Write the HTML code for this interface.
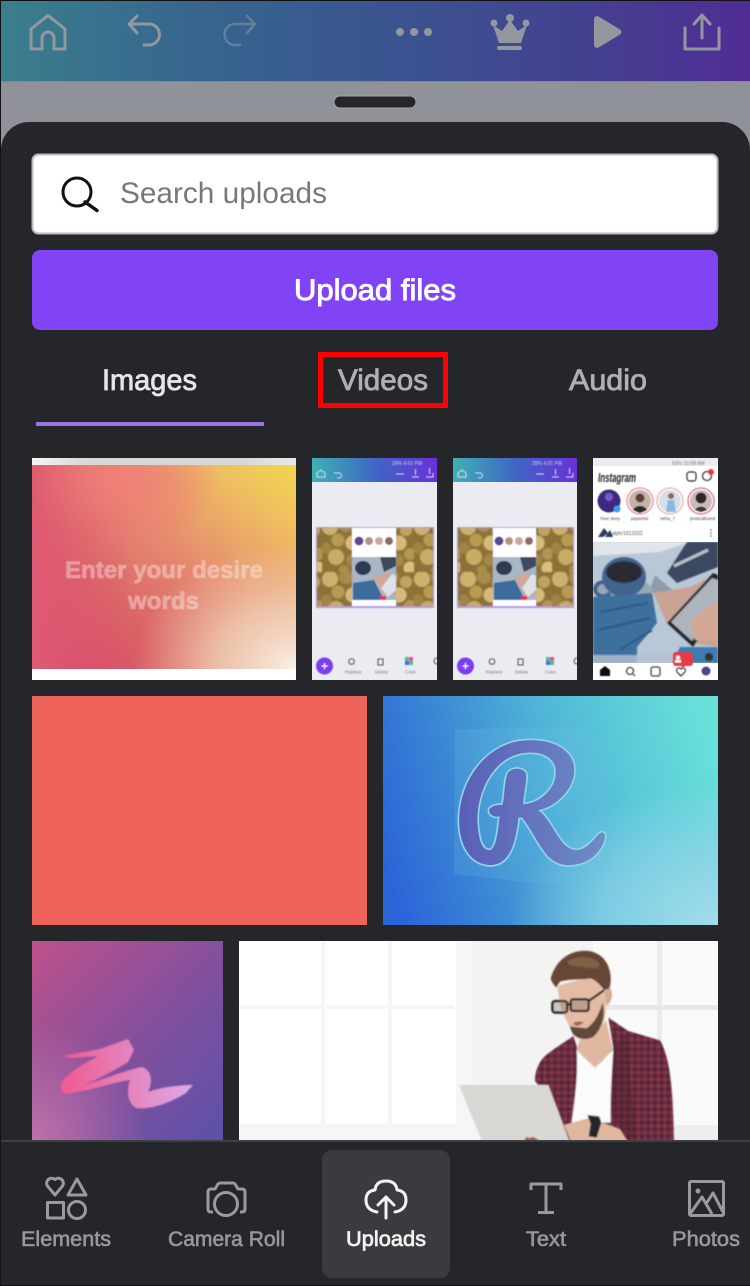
<!DOCTYPE html>
<html lang="en">
<head>
<meta charset="utf-8">
<title>Uploads</title>
<style>
html,body{margin:0;padding:0;background:#25262a;width:750px;height:1286px;overflow:hidden}
svg{display:block}
text{font-family:"Liberation Sans",sans-serif}
</style>
</head>
<body>
<svg width="750" height="1286" viewBox="0 0 750 1286" xmlns="http://www.w3.org/2000/svg">
<defs>
<linearGradient id="top" x1="0" x2="1" y1="0" y2="0">
<stop offset="0" stop-color="#3a7f8c"/><stop offset=".25" stop-color="#37668e"/><stop offset=".5" stop-color="#3a5590"/><stop offset=".75" stop-color="#42438f"/><stop offset="1" stop-color="#502d94"/>
</linearGradient>
<linearGradient id="mini" x1="0" x2="1" y1="0" y2="0">
<stop offset="0" stop-color="#3fb0b5"/><stop offset=".5" stop-color="#3f66c4"/><stop offset="1" stop-color="#6a30d8"/>
</linearGradient>
<linearGradient id="strip" x1="0" x2="1" y1="0" y2="0">
<stop offset="0" stop-color="#f4f4f2"/><stop offset=".2" stop-color="#d8d8d6"/><stop offset=".8" stop-color="#d8d8d6"/><stop offset="1" stop-color="#e8e8e6"/>
</linearGradient>
<linearGradient id="t1" x1="0" y1="1" x2="1" y2="0">
<stop offset="0" stop-color="#d6446a"/><stop offset=".3" stop-color="#da6266"/><stop offset=".56" stop-color="#e68a70"/><stop offset=".82" stop-color="#efbc62"/><stop offset="1" stop-color="#f0d84e"/>
</linearGradient>
<radialGradient id="t1a" cx="1" cy="1" r=".62"><stop offset="0" stop-color="#faf0e6"/><stop offset=".5" stop-color="#f0d0b4" stop-opacity=".8"/><stop offset="1" stop-color="#ecc8a8" stop-opacity="0"/></radialGradient>
<radialGradient id="t1b" cx=".35" cy=".06" r=".36"><stop offset="0" stop-color="#f08078"/><stop offset="1" stop-color="#ee7078" stop-opacity="0"/></radialGradient>
<linearGradient id="t1c" x1="0" x2="1" y1="0" y2="0"><stop offset="0" stop-color="#de5a72"/><stop offset=".38" stop-color="#de5a72" stop-opacity="0"/></linearGradient>
<linearGradient id="r" gradientUnits="userSpaceOnUse" x1="383" y1="860" x2="718" y2="760">
<stop offset="0" stop-color="#2b64d8"/><stop offset=".28" stop-color="#3c8ad4"/><stop offset=".55" stop-color="#50b4d8"/><stop offset=".8" stop-color="#5ccfd8"/><stop offset="1" stop-color="#68e0da"/>
</linearGradient>
<radialGradient id="rb" cx="1" cy="1" r=".62"><stop offset="0" stop-color="#a4dcea"/><stop offset=".55" stop-color="#90d4e8" stop-opacity=".7"/><stop offset="1" stop-color="#90d4e8" stop-opacity="0"/></radialGradient>
<linearGradient id="rf" x1="0" x2="1" y1="0" y2="0"><stop offset="0" stop-color="#5a5eb6"/><stop offset="1" stop-color="#6e8cc6"/></linearGradient>
<linearGradient id="p" x1="0" y1="0" x2="1" y2="1">
<stop offset="0" stop-color="#c0508a"/><stop offset=".5" stop-color="#85509c"/><stop offset="1" stop-color="#5c50aa"/>
</linearGradient>
<radialGradient id="pb" cx="0" cy="1" r=".6"><stop offset="0" stop-color="#c070a8"/><stop offset="1" stop-color="#c070a8" stop-opacity="0"/></radialGradient>
<linearGradient id="brush" x1="0" x2="1" y1="0" y2="0"><stop offset="0" stop-color="#ee5a90"/><stop offset="1" stop-color="#dcaae6"/></linearGradient>
<pattern id="coins" width="46" height="52" patternUnits="userSpaceOnUse">
<rect width="46" height="52" fill="#8d7238"/>
<circle cx="8" cy="7" r="8" fill="#cdb26e"/><circle cx="24" cy="5" r="7" fill="#a98c48"/><circle cx="38" cy="10" r="6" fill="#bfa45e"/>
<circle cx="16" cy="20" r="6.500" fill="#b89a52"/><circle cx="31" cy="23" r="7.500" fill="#d6bb78"/><circle cx="4" cy="28" r="5.500" fill="#a08444"/>
<circle cx="14" cy="37" r="8" fill="#c9ac64"/><circle cx="30" cy="40" r="6" fill="#a48746"/><circle cx="42" cy="34" r="6" fill="#b39650"/><circle cx="42" cy="48" r="6.500" fill="#d9c07e"/><circle cx="22" cy="50" r="5" fill="#ab8e4a"/>
</pattern>
<pattern id="plaid" width="20" height="20" patternUnits="userSpaceOnUse">
<rect width="20" height="20" fill="#6e2a3c"/><rect width="10" height="10" fill="#4a2a38"/><rect x="10" y="10" width="10" height="10" fill="#84384a"/>
</pattern>
<filter id="b1" x="-5%" y="-5%" width="110%" height="110%"><feGaussianBlur stdDeviation=".5"/></filter>
<filter id="b2" x="-10%" y="-10%" width="120%" height="120%"><feGaussianBlur stdDeviation=".9"/></filter>
<filter id="b4" x="-10%" y="-10%" width="120%" height="120%"><feGaussianBlur stdDeviation="2.400"/></filter>
<clipPath id="cMan"><rect x="239" y="941" width="479" height="199"/></clipPath>
<clipPath id="cT2"><rect x="312" y="458" width="125" height="222"/></clipPath>
<clipPath id="cT3"><rect x="453" y="458" width="124" height="222"/></clipPath>
<clipPath id="cT4"><rect x="593" y="542" width="125" height="121"/></clipPath>
<clipPath id="cR"><rect x="383" y="696" width="335" height="229"/></clipPath>
</defs>

<!-- background -->
<rect width="750" height="1286" fill="#8f9299"/>
<rect width="750" height="81" fill="url(#top)"/>
<rect y="81" width="750" height="1" fill="#7f8a96"/>

<!-- top icons -->
<g fill="none" stroke="#94979e" stroke-width="3" stroke-linejoin="round" stroke-linecap="round">
<path d="M31 49V29L48 15.500L65 29V49H54V38a6 6 0 0 0-12 0V49Z"/>
<path d="M137 16L129 24L137 33M129 24H149a10.500 10.500 0 0 1 0 21H144"/>
<path d="M247 16L255 24L247 33M255 24H235a10.500 10.500 0 0 0 0 21H240" stroke="#5f8099" stroke-width="2.500"/>
<path d="M685 28V49H719V28M702 38V16M694 24L702 15L710 24"/>
</g>
<g fill="#94979e">
<circle cx="400" cy="32" r="4"/><circle cx="414" cy="32" r="4"/><circle cx="428" cy="32" r="4"/>
<circle cx="494" cy="23" r="3.500"/><circle cx="510" cy="18" r="4"/><circle cx="526" cy="23" r="3.500"/>
<path d="M499 43L493 25L502 31L510 20L518 31L527 25L521 43Z"/>
<rect x="497" y="46" width="25" height="4" rx="2"/>
<path d="M594 19a3 3 0 0 1 4.500-2.500L620 29.500a3 3 0 0 1 0 5L598.500 47.500a3 3 0 0 1-4.500-2.500Z"/>
</g>

<!-- handle -->
<rect x="334" y="96" width="82" height="12" rx="6" fill="#25262a" stroke="#a4a6ab" stroke-width="1"/>

<!-- sheet -->
<path d="M1 1286V150a28 28 0 0 1 28-28H722a28 28 0 0 1 28 28V1286Z" fill="#25262a"/>

<!-- search -->
<rect x="32.500" y="154.500" width="685" height="79" rx="6" fill="#fff" stroke="#b9bbc0" stroke-width="2"/>
<circle cx="77" cy="192" r="14" fill="none" stroke="#111" stroke-width="3"/>
<path d="M85 202L97 210.500" stroke="#111" stroke-width="3.500" stroke-linecap="round"/>
<text x="120" y="203" font-size="30" fill="#77787d" textLength="207" lengthAdjust="spacingAndGlyphs">Search uploads</text>

<!-- upload button -->
<rect x="32" y="250" width="686" height="80" rx="8" fill="#8043f5"/>
<text x="294" y="300" font-size="30" fill="#fff" stroke="#fff" stroke-width=".9" textLength="162" lengthAdjust="spacingAndGlyphs">Upload files</text>

<!-- tabs -->
<g font-size="30" stroke-width=".8">
<text x="102" y="390" fill="#e6e6e6" stroke="#e6e6e6" textLength="95" lengthAdjust="spacingAndGlyphs">Images</text>
<text x="338" y="390" fill="#b0b0b2" stroke="#b0b0b2" textLength="90" lengthAdjust="spacingAndGlyphs">Videos</text>
<text x="569" y="390" fill="#b0b0b2" stroke="#b0b0b2" textLength="78" lengthAdjust="spacingAndGlyphs">Audio</text>
</g>
<rect x="36" y="422" width="228" height="4" fill="#9b74e6"/>
<rect x="320.500" y="354.500" width="125" height="51" fill="none" stroke="#fe0000" stroke-width="5"/>

<!-- thumbnail 1 -->
<rect x="32" y="458" width="264" height="222" fill="#fff"/>
<rect x="32" y="458" width="264" height="7" fill="url(#strip)"/>
<rect x="32" y="465" width="264" height="204" fill="url(#t1)"/>
<rect x="32" y="465" width="264" height="204" fill="url(#t1c)"/>
<rect x="32" y="465" width="264" height="204" fill="url(#t1b)"/>
<rect x="32" y="465" width="264" height="204" fill="url(#t1a)"/>
<g filter="url(#b1)" font-size="24" font-weight="700" fill="#fff" fill-opacity=".36" stroke="#fff" stroke-opacity=".3" stroke-width=".6">
<text x="65" y="578" textLength="198" lengthAdjust="spacingAndGlyphs">Enter your desire</text>
<text x="128" y="609" textLength="71" lengthAdjust="spacingAndGlyphs">words</text>
</g>

<!-- thumbnail 2 -->
<g clip-path="url(#cT2)">
<rect x="312" y="458" width="125" height="222" fill="#ebebf2"/>
<rect x="312" y="458" width="125" height="24" fill="url(#mini)"/>
<g filter="url(#b1)">
<g fill="none" stroke="#d8e4f0" stroke-width="1">
<path d="M317 477v-4l4-3 4 3v4ZM334 473h5a2.500 2.500 0 0 1 0 5h-2M396 474h8M412 477h7M415.500 469v6M426 477h7v-4M429.500 468v6"/>
</g>
<g fill="#c8d4ec" font-size="5"><text x="392" y="465">28% 4:01 PM</text></g>
<rect x="316" y="527" width="118" height="81" fill="#b79ae6"/>
<g filter="url(#b1)">
<rect x="317" y="528" width="35" height="78" fill="url(#coins)"/>
<rect x="396" y="528" width="37" height="78" fill="url(#coins)"/>
</g>
<rect x="352" y="528" width="44" height="78" fill="#fff"/>
<rect x="352" y="557" width="44" height="43" fill="#a8b6c6"/>
<path d="M380 557H396V566L384 572Z" fill="#3c4a5e"/>
<ellipse cx="363" cy="568" rx="8" ry="7" fill="#2e3a52"/>
<path d="M353 583L374 580L384 600H353Z" fill="#3c6c9c"/>
<path d="M373 578L388 572L396 585V595L383 594Z" fill="#cfa89a"/>
<path d="M381 588L392 574L396 576V590L388 597Z" fill="#dde2e8"/>
<circle cx="359" cy="541" r="4.500" fill="#5a4a90"/><circle cx="369" cy="541" r="4" fill="#b89080"/><circle cx="379" cy="541" r="4" fill="#c8a8a0"/><circle cx="389" cy="541" r="4" fill="#8a6a6a"/>
<rect x="380" y="596" width="6" height="4" fill="#e03848"/>
<circle cx="324.500" cy="666" r="8.500" fill="#7c3cf0"/>
<path d="M321.500 666h6M324.500 663v6" stroke="#fff" stroke-width="1"/>
<circle cx="351.500" cy="661.500" r="2.800" fill="none" stroke="#555" stroke-width="1"/>
<rect x="378" y="659" width="5" height="6" fill="none" stroke="#555" stroke-width="1"/>
<rect x="405" y="657" width="8" height="8" fill="#55c080"/><rect x="409" y="657" width="4" height="4" fill="#f04aa0"/><rect x="405" y="661" width="4" height="4" fill="#3a70ff"/>
<circle cx="437" cy="661" r="3" fill="none" stroke="#555"/>
<g font-size="4.500" fill="#777"><text x="345" y="673.500">Replace</text><text x="375" y="673.500">Delete</text><text x="405" y="673.500">Color</text></g>
</g>
</g>

<!-- thumbnail 3 -->
<g clip-path="url(#cT3)">
<rect x="453" y="458" width="124" height="222" fill="#ebebf2"/>
<rect x="453" y="458" width="124" height="24" fill="url(#mini)"/>
<g filter="url(#b1)">
<g fill="none" stroke="#d8e4f0" stroke-width="1">
<path d="M458 477v-4l4-3 4 3v4ZM475 473h5a2.500 2.500 0 0 1 0 5h-2M536 474h8M552 477h7M555.500 469v6M566 477h7v-4M569.500 468v6"/>
</g>
<g fill="#c8d4ec" font-size="5"><text x="532" y="465">28% 4:01 PM</text></g>
<rect x="457" y="527" width="117" height="81" fill="#b79ae6"/>
<g filter="url(#b1)">
<rect x="458" y="528" width="35" height="78" fill="url(#coins)"/>
<rect x="536" y="528" width="37" height="78" fill="url(#coins)"/>
</g>
<rect x="493" y="528" width="43" height="78" fill="#fff"/>
<rect x="493" y="557" width="43" height="43" fill="#a8b6c6"/>
<path d="M520 557H536V566L524 572Z" fill="#3c4a5e"/>
<ellipse cx="504" cy="568" rx="8" ry="7" fill="#2e3a52"/>
<path d="M494 583L515 580L525 600H494Z" fill="#3c6c9c"/>
<path d="M514 578L528 572L536 585V595L524 594Z" fill="#cfa89a"/>
<path d="M522 588L532 574L536 576V590L528 597Z" fill="#dde2e8"/>
<circle cx="499" cy="541" r="4.500" fill="#5a4a90"/><circle cx="509" cy="541" r="4" fill="#b89080"/><circle cx="519" cy="541" r="4" fill="#c8a8a0"/><circle cx="529" cy="541" r="4" fill="#8a6a6a"/>
<rect x="521" y="596" width="6" height="4" fill="#e03848"/>
<circle cx="465.500" cy="666" r="8.500" fill="#7c3cf0"/>
<path d="M462.500 666h6M465.500 663v6" stroke="#fff" stroke-width="1"/>
<circle cx="492" cy="661.500" r="2.800" fill="none" stroke="#555" stroke-width="1"/>
<rect x="518" y="659" width="5" height="6" fill="none" stroke="#555" stroke-width="1"/>
<rect x="546" y="657" width="8" height="8" fill="#55c080"/><rect x="550" y="657" width="4" height="4" fill="#f04aa0"/><rect x="546" y="661" width="4" height="4" fill="#3a70ff"/>
<circle cx="577" cy="661" r="3" fill="none" stroke="#555"/>
<g font-size="4.500" fill="#777"><text x="486" y="673.500">Replace</text><text x="515" y="673.500">Delete</text><text x="545" y="673.500">Color</text></g>
</g>
</g>

<!-- thumbnail 4 -->
<rect x="593" y="458" width="125" height="222" fill="#fff"/>
<rect x="593" y="458" width="125" height="8" fill="#ececec"/>
<g filter="url(#b1)">
<text x="598" y="482" font-family="Liberation Serif" font-style="italic" font-weight="700" font-size="13" fill="#222" textLength="38" lengthAdjust="spacingAndGlyphs">Instagram</text>
<text x="672" y="465" font-size="5" fill="#777">63% 10:58 AM</text>
<rect x="687" y="472" width="9" height="9" rx="2.500" fill="none" stroke="#333" stroke-width="1.200"/>
<circle cx="707" cy="476" r="4.500" fill="none" stroke="#333" stroke-width="1.200"/>
<circle cx="711" cy="472" r="3" fill="#e8354a"/>
<circle cx="609" cy="501" r="11.500" fill="#3b2a80"/><circle cx="609" cy="497" r="4" fill="#7a5ac0"/>
<circle cx="617" cy="509" r="3.500" fill="#3d9cf0"/>
<g fill="none" stroke-width="1.300">
<circle cx="640" cy="501" r="13" stroke="#e88aa0"/><circle cx="670" cy="501" r="13" stroke="#eab0a0"/><circle cx="701" cy="501" r="13" stroke="#e06a90"/>
</g>
<circle cx="640" cy="501" r="11" fill="#c4b4a8"/><path d="M633 510a8 8 0 0 1 14 0L640 513Z" fill="#2c2a2c"/><circle cx="640" cy="498" r="4.500" fill="#5a4038"/>
<circle cx="670" cy="501" r="11" fill="#d8dfe6"/><path d="M666 512L668 500L674 500L676 512Z" fill="#8ab8e0"/><circle cx="671" cy="496" r="3" fill="#8a6a5a"/>
<circle cx="701" cy="501" r="11" fill="#c8bcb8"/><circle cx="701" cy="498" r="5.500" fill="#2e2628"/><path d="M695 510a7 7 0 0 1 12 0L701 512Z" fill="#3a3236"/>
<g font-size="4.500" fill="#444"><text x="600" y="520">Your story</text><text x="631" y="520">pquee92</text><text x="660" y="520">neha_7</text><text x="690" y="520">jessicabrand</text></g>
<path d="M598 537L604 528L608 533L603 537ZM605 537L610 530L613 537Z" fill="#2a3a60"/>
<text x="612" y="535" font-size="5" fill="#555">alphr1012022</text>
<circle cx="711" cy="530" r=".8" fill="#555"/><circle cx="711" cy="533" r=".8" fill="#555"/><circle cx="711" cy="536" r=".8" fill="#555"/>
</g>
<g clip-path="url(#cT4)">
<rect x="593" y="542" width="125" height="121" fill="#b9c8d6"/>
<g filter="url(#b2)">
<path d="M593 542H690L660 552L593 556Z" fill="#dfe5ea"/>
<path d="M667 573L687 542H718V567L677 583Z" fill="#3a4a60"/>
<path d="M674 566L708 550" stroke="#b8c4d0" stroke-width="3"/>
<path d="M655 575L672 590L660 600L650 590Z" fill="#8b9cae"/>
<ellipse cx="624" cy="590" rx="28" ry="12" fill="#98a8b8"/>
<ellipse cx="624" cy="577" rx="22" ry="20" fill="#43648e"/>
<ellipse cx="624" cy="572" rx="18" ry="11" fill="#2a2a30"/>
<path d="M607 583a8 7 0 1 0 3 10" fill="none" stroke="#43648e" stroke-width="4"/>
<path d="M593 597L652 593L657 623L637 647V663H593Z" fill="#3e6f9d"/>
<path d="M600 612L648 603M598 630L650 618M620 650L652 630" stroke="#2f5c88" stroke-width="2.500" fill="none"/>
<path d="M653 593L690 587L718 573V647L690 643L667 623Z" fill="#c9a394"/>
<path d="M667 623L713 573L718 575V610L693 647Z" fill="#22262c"/>
<path d="M671 622L712 578L718 580V606L692 641Z" fill="#aeb5bc"/>
<path d="M690 620L718 600V640L695 640Z" fill="#d3a796"/>
<path d="M680 647L718 647V663H672Z" fill="#3f7bb0"/>
<path d="M593 655H680L684 663H593Z" fill="#b4c2d0" fill-opacity=".8"/>
</g>
</g>
<g filter="url(#b1)">
<path d="M676 652h14a3 3 0 0 1 3 3v8a3 3 0 0 1-3 3h-5l-2 2-2-2h-5a3 3 0 0 1-3-3v-8a3 3 0 0 1 3-3Z" fill="#e83a48"/>
<circle cx="678" cy="657.500" r="2" fill="#fff"/><rect x="675" y="660" width="6" height="2.500" fill="#fff"/>
<circle cx="709" cy="657" r="4" fill="#333"/>
<path d="M600 676v-6l5-4 5 4v6Z" fill="#111"/>
<circle cx="630" cy="671" r="3.500" fill="none" stroke="#444" stroke-width="1.300"/><path d="M633 674l2 2" stroke="#444" stroke-width="1.300"/>
<rect x="651" y="667" width="9" height="9" rx="2" fill="none" stroke="#444" stroke-width="1.300"/>
<path d="M681 676l-4-4a2.500 2.500 0 0 1 4-3 2.500 2.500 0 0 1 4 3Z" fill="none" stroke="#444" stroke-width="1.300"/>
<circle cx="706" cy="671" r="4.500" fill="#50428c"/>
</g>

<!-- coral -->
<rect x="32" y="696" width="335" height="229" fill="#ee635a"/>

<!-- R tile -->
<g clip-path="url(#cR)">
<rect x="383" y="696" width="335" height="229" fill="url(#r)"/>
<rect x="383" y="696" width="335" height="229" fill="url(#rb)"/>
<path d="M455 729L580 728L604 745L612 872L553 885L454 874Z" fill="#6cc4e0" fill-opacity=".2"/>
<g transform="translate(380 690) scale(.33333)">
<path fill-rule="evenodd" fill="url(#rf)" stroke="#8fd4e8" stroke-width="5" d="M330 528C270 525 235 470 235 390C235 270 320 148 450 148C540 148 585 190 585 240C585 300 530 350 480 362C520 390 540 478 590 478C625 478 650 425 665 425C680 425 682 445 665 475C640 515 600 528 565 528C490 528 470 440 425 385L418 385C410 440 400 528 330 528ZM295 400C290 300 350 190 450 190C500 190 525 215 525 245C525 295 480 335 432 340C435 300 445 270 440 250C435 232 395 225 380 250C370 275 372 320 365 342C340 342 325 350 325 362C325 375 340 385 356 382C352 420 345 478 328 478C305 478 298 440 295 400Z"/>
</g>
</g>

<!-- purple tile -->
<rect x="32" y="941" width="191" height="199" fill="url(#p)"/>
<rect x="32" y="941" width="191" height="199" fill="url(#pb)"/>
<g filter="url(#b2)">
<path d="M62 1056L100 1049L128 1039L134 1050L128 1062C115 1070 100 1078 84 1085C100 1081 125 1070 142 1067C152 1070 153 1082 148 1092C158 1088 175 1085 193 1085L186 1093C170 1103 150 1110 136 1108C126 1102 127 1088 130 1080C115 1082 85 1092 64 1094C58 1088 60 1080 70 1074C78 1066 88 1062 98 1056L72 1058Z" fill="url(#brush)"/>
</g>

<!-- man tile -->
<g clip-path="url(#cMan)">
<rect x="239" y="941" width="479" height="199" fill="#fff"/>
<rect x="473" y="941" width="120" height="199" fill="#f3f3f2"/>
<rect x="593" y="941" width="125" height="199" fill="#fafafa"/>
<g fill="#f6f6f4">
<rect x="321" y="941" width="4" height="185"/>
<rect x="388" y="941" width="4" height="185"/>
<rect x="456" y="941" width="17" height="199"/>
<rect x="239" y="1005" width="215" height="4"/>
<rect x="239" y="1124" width="240" height="16"/>
</g>
<rect x="657" y="941" width="5" height="185" fill="#ececea"/>
<rect x="607" y="1005" width="111" height="5" fill="#e8e8e6"/>
<rect x="670" y="1125" width="48" height="15" fill="#eeeeec"/>
<g transform="translate(480 941) scale(.33333)" filter="url(#b4)">
<!-- shirt -->
<path d="M165 420C165 390 175 365 195 345C225 320 260 300 280 285L292 322L345 378L400 322L385 230L445 270L540 298C565 340 580 420 582 600H250C220 520 190 450 165 420Z" fill="url(#plaid)"/>
<path d="M445 270L400 322L392 510L435 595H470L450 400Z" fill="#4c2230" fill-opacity=".4"/>
<!-- t-shirt -->
<path d="M290 325L345 380L400 325C395 400 390 480 392 545L275 545C285 470 295 400 290 325Z" fill="#fbfbfb"/>
<!-- neck -->
<path d="M300 295C330 290 365 265 378 235L398 325C380 345 365 365 345 380C325 360 305 345 290 325Z" fill="#e0b8a2"/>
<!-- face -->
<path d="M232 135C280 120 320 110 335 112C360 125 372 145 378 190C380 235 365 265 340 285C320 295 295 295 285 285C268 255 250 225 240 190Z" fill="#e4bca6"/>
<path d="M385 138C402 145 398 180 380 195L372 155Z" fill="#d8a892"/>
<!-- beard -->
<path d="M368 185C378 225 365 265 340 288C318 298 295 295 280 280C272 268 272 262 270 255C290 262 305 258 318 262C340 250 355 225 368 185Z" fill="#634a3a"/>
<path d="M278 246Q295 238 312 244Q300 256 286 254Z" fill="#a86458"/>
<!-- hair -->
<path d="M212 112C225 70 250 42 290 32C335 22 375 40 388 85C395 110 392 130 388 142L372 148C360 130 345 115 330 112C300 118 265 112 240 122L228 140C222 130 215 125 212 112Z" fill="#664734"/>
<path d="M262 62C290 45 330 42 355 65C365 85 340 85 310 78C290 75 270 80 262 62Z" fill="#7f604a"/>
<!-- glasses -->
<g fill="#6a5a52" fill-opacity=".3" stroke="#26262a" stroke-width="7">
<rect x="217" y="180" width="45" height="35" rx="9"/>
<rect x="272" y="175" width="54" height="35" rx="7"/>
</g>
<path d="M262 192L272 188M326 180L372 148" stroke="#26262a" stroke-width="7" fill="none"/>
<!-- laptop -->
<path d="M-63 432H205L268 600H6Z" fill="#d9d7d3"/>
<path d="M132 600q8-20 16-8q12-10 30 8Z" fill="#a85a48"/>
<!-- arm + watch -->
<path d="M252 552L330 530L420 565L442 600H272Z" fill="#e0b8a0"/>
<path d="M322 522L358 526L364 545L350 590L326 586L332 548Z" fill="#24262c"/>
</g>
</g>

<!-- bottom bar -->
<rect x="0" y="1140" width="750" height="146" fill="#25262a"/>
<rect x="0" y="1140" width="750" height="2" fill="#3e3f44"/>
<rect x="322" y="1150" width="128" height="128" rx="10" fill="#3a3b3e"/>

<!-- Elements + others -->
<g fill="none" stroke="#999a9d" stroke-width="3" stroke-linejoin="round">
<path d="M55 1195L47.500 1186a5 5 0 0 1 7.500-6.500a5 5 0 0 1 7.500 6.500Z"/>
<path d="M77 1179L86 1195H68Z"/>
<rect x="47.500" y="1202.500" width="16" height="15.500"/>
<circle cx="77" cy="1210" r="8.500"/>
<!-- camera -->
<path d="M213 1212H211q-3 0-3-3V1192q0-3 3-3H215L218 1184q1-1 2-1H233q1 0 2 1L238 1189H242q3 0 3 3V1209q0 3-3 3H240"/>
<ellipse cx="226" cy="1204" rx="11.500" ry="11.500"/>
<!-- T -->
<path d="M531 1190V1184H561V1190M546 1184V1212M538 1212.500H554"/>
<!-- Photos -->
<rect x="689.500" y="1181.500" width="34" height="34" rx="1.500"/>
<path d="M690 1214L702 1197L712 1214M706 1204L713 1193L723 1212"/>
</g>
<circle cx="698" cy="1191" r="2.500" fill="#999a9d"/>

<!-- Uploads icon -->
<g fill="none" stroke="#f2f2f2" stroke-width="3" stroke-linecap="round" stroke-linejoin="round">
<path d="M377 1212Q366 1210 366 1200Q366 1191 375 1190Q376 1181 386 1181Q396 1181 397 1190Q406 1191 406 1200Q406 1210 395 1212"/>
<path d="M386 1218V1197M378 1205L386 1197L394 1205"/>
</g>

<!-- Labels -->
<g font-size="21" fill="#97989b" stroke="#97989b" stroke-width=".6">
<text x="21" y="1246" textLength="90" lengthAdjust="spacingAndGlyphs">Elements</text>
<text x="168" y="1246" textLength="117" lengthAdjust="spacingAndGlyphs">Camera Roll</text>
<text x="526" y="1246" textLength="40" lengthAdjust="spacingAndGlyphs">Text</text>
<text x="672" y="1246" textLength="68" lengthAdjust="spacingAndGlyphs">Photos</text>
<text x="346" y="1246" fill="#f2f2f2" stroke="#f2f2f2" stroke-width=".7" textLength="80" lengthAdjust="spacingAndGlyphs">Uploads</text>
</g>

<!-- screenshot edges -->
<rect x="0" y="0" width="750" height="1" fill="#111"/>
<rect x="0" y="0" width="1" height="1286" fill="#111"/>
<rect x="0" y="1285" width="750" height="1" fill="#111"/>
</svg>
</body>
</html>
